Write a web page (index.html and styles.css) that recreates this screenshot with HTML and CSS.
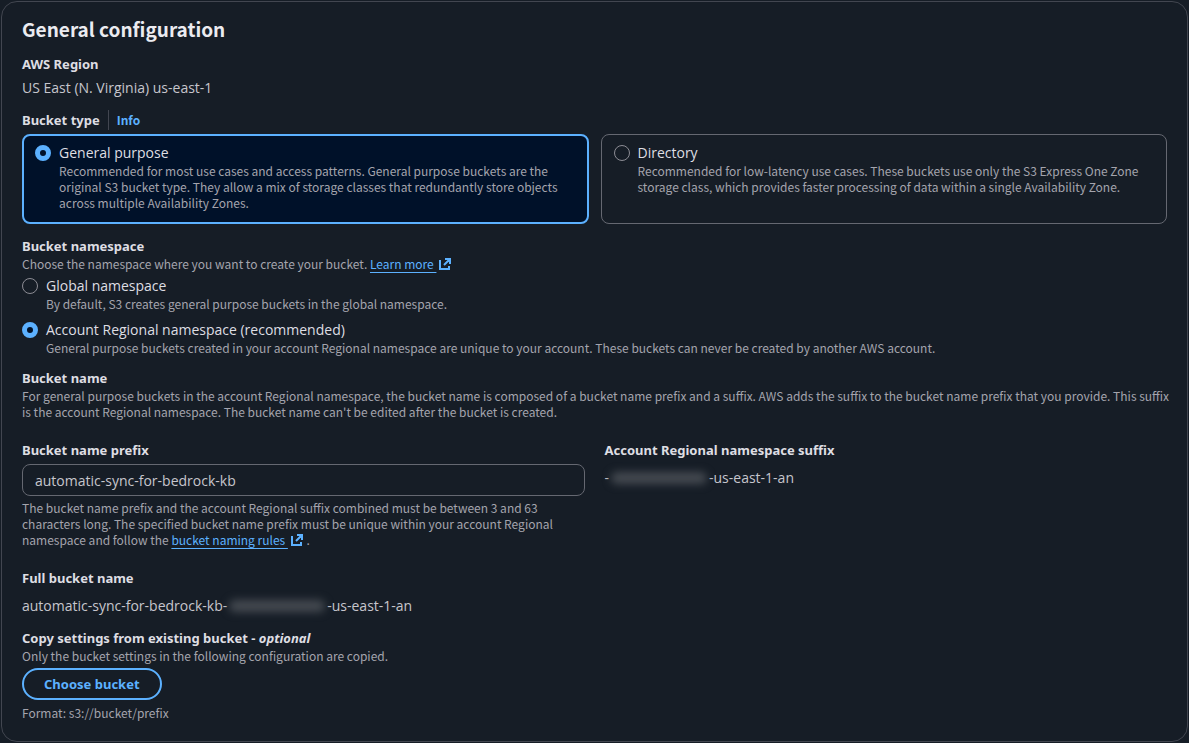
FILE: index.html
```html
<!DOCTYPE html>
<html lang="en">
<head>
<meta charset="utf-8">
<title>General configuration</title>
<link rel="stylesheet" href="styles.css">
</head>
<body>
<main class="card">
  <h2 class="title">General configuration</h2>

  <section class="field region">
    <h3 class="label">AWS Region</h3>
    <p class="value">US East (N. Virginia) us-east-1</p>
  </section>

  <section class="field">
    <div class="label-row">
      <h3 class="label" id="type-label">Bucket type</h3>
      <a class="info" href="#">Info</a>
    </div>
    <div class="tiles" role="radiogroup" aria-labelledby="type-label">
      <label class="tile option selected">
        <input class="radio" type="radio" name="type" checked>
        <span class="option-text">
          <span class="option-name">General purpose</span>
          <span class="hint">Recommended for most use cases and access patterns. General purpose buckets are the original S3 bucket type. They allow a mix of storage classes that redundantly store objects across multiple Availability Zones.</span>
        </span>
      </label>
      <label class="tile option">
        <input class="radio" type="radio" name="type">
        <span class="option-text">
          <span class="option-name">Directory</span>
          <span class="hint">Recommended for low-latency use cases. These buckets use only the S3 Express One Zone storage class, which provides faster processing of data within a single Availability Zone.</span>
        </span>
      </label>
    </div>
  </section>

  <section class="field">
    <h3 class="label" id="ns-label">Bucket namespace</h3>
    <p class="hint">Choose the namespace where you want to create your bucket. <a class="link" href="#"><span class="link-text">Learn more&nbsp;</span><svg class="external" viewBox="0 0 14 14" aria-hidden="true"><path d="M7 2h5v5M12 2 6 8M2 3v9h9V9"/></svg></a></p>
    <div class="radios" role="radiogroup" aria-labelledby="ns-label">
      <label class="option">
        <input class="radio" type="radio" name="namespace">
        <span class="option-text">
          <span class="option-name">Global namespace</span>
          <span class="hint">By default, S3 creates general purpose buckets in the global namespace.</span>
        </span>
      </label>
      <label class="option">
        <input class="radio" type="radio" name="namespace" checked>
        <span class="option-text">
          <span class="option-name">Account Regional namespace (recommended)</span>
          <span class="hint">General purpose buckets created in your account Regional namespace are unique to your account. These buckets can never be created by another AWS account.</span>
        </span>
      </label>
    </div>
  </section>

  <section class="field name">
    <h3 class="label">Bucket name</h3>
    <p class="hint wide">For general purpose buckets in the account Regional namespace, the bucket name is composed of a bucket name prefix and a suffix. AWS adds the suffix to the bucket name prefix that you provide. This suffix is the account Regional namespace. The bucket name can't be edited after the bucket is created.</p>
  </section>

  <div class="columns">
    <div>
      <label class="label" for="prefix">Bucket name prefix</label>
      <input class="text-input" id="prefix" type="text" value="automatic-sync-for-bedrock-kb">
      <p class="hint">The bucket name prefix and the account Regional suffix combined must be between 3 and 63 characters long. The specified bucket name prefix must be unique within your account Regional namespace and follow the <a class="link" href="#"><span class="link-text">bucket naming rules&nbsp;</span><svg class="external" viewBox="0 0 14 14" aria-hidden="true"><path d="M7 2h5v5M12 2 6 8M2 3v9h9V9"/></svg></a> .</p>
    </div>
    <div>
      <h3 class="label">Account Regional namespace suffix</h3>
      <p class="value suffix">-<span class="redacted"></span>-us-east-1-an</p>
    </div>
  </div>

  <section class="field full">
    <h3 class="label">Full bucket name</h3>
    <p class="value">automatic-sync-for-bedrock-kb-<span class="redacted"></span>-us-east-1-an</p>
  </section>

  <section class="field">
    <h3 class="label">Copy settings from existing bucket - <em>optional</em></h3>
    <p class="hint">Only the bucket settings in the following configuration are copied.</p>
    <button class="button" type="button">Choose bucket</button>
    <p class="hint">Format: s3://bucket/prefix</p>
  </section>
</main>
</body>
</html>
```

FILE: styles.css
```css
* {
  box-sizing: border-box;
}

body {
  margin: 0;
  padding: 1px;
  background: #161d26;
  color: #c6c6cd;
  font: 14px/20px "Open Sans", "Noto Sans", sans-serif;
}

h2, h3, p {
  margin: 0;
}

.card {
  display: flex;
  flex-direction: column;
  gap: 12px;
  padding: 16px 20px 20px;
  border: 1px solid #424650;
  border-radius: 16px;
  background: #161d26;
}

.title {
  margin-bottom: 2px;
  color: #ebebf0;
  font-family: "Noto Sans CJK SC", sans-serif;
  font-size: 19px;
  font-weight: 700;
  line-height: 22px;
}

.label {
  display: block;
  color: #dedee3;
  font-family: "Noto Sans", sans-serif;
  font-size: 13px;
  font-weight: 700;
  line-height: 20px;
}

.region .value {
  margin-top: 4px;
}

.label-row {
  display: flex;
  align-items: center;
  margin-bottom: 4px;
}

.info {
  margin-left: 8px;
  padding-left: 8px;
  border-left: 1px solid #424650;
  color: #5cb1ff;
  font-family: "Noto Sans CJK SC", sans-serif;
  font-size: 12px;
  font-weight: 700;
  text-decoration: none;
}

.hint {
  display: block;
  color: #a4a4ad;
  font-family: "Noto Sans CJK SC", sans-serif;
  font-size: 12px;
  line-height: 16px;
}

.wide {
  margin-right: -8px;
}

.tiles {
  display: grid;
  grid-template-columns: 1fr 1fr;
  gap: 12px;
}

.tile {
  min-height: 90px;
  padding: 8px 12px;
  border: 1px solid #656871;
  border-radius: 8px;
}

.tile.selected {
  padding: 7px 11px;
  border: 2px solid #5cb1ff;
  background: #001129;
}

.option {
  display: flex;
  align-items: flex-start;
  gap: 8px;
}

.option-name {
  display: block;
  color: #dedee3;
}

.radio {
  flex: none;
  width: 16px;
  height: 16px;
  margin: 2px 0;
  border: 1px solid #8c8c94;
  border-radius: 50%;
  appearance: none;
}

.radio:checked {
  border: 5px solid #5cb1ff;
  background: #001129;
}

.radios {
  display: grid;
  gap: 8px;
  margin-top: 4px;
}

.link {
  color: #5cb1ff;
  text-decoration: none;
  white-space: nowrap;
}

.link-text {
  text-decoration: underline;
  text-underline-offset: 3px;
}

.external {
  width: 14px;
  height: 14px;
  margin-left: 2px;
  vertical-align: -2px;
  fill: none;
  stroke: #5cb1ff;
  stroke-width: 2;
}

.columns {
  display: grid;
  grid-template-columns: 1fr 1fr;
  gap: 20px;
  margin-top: 8px;
}

.text-input {
  display: block;
  width: 100%;
  height: 32px;
  margin: 4px 0;
  padding: 0 12px;
  border: 1px solid #656871;
  border-radius: 8px;
  background: #161d26;
  color: #c6c6cd;
  font: inherit;
}

.suffix {
  margin-top: 8px;
}

.redacted {
  display: inline-block;
  width: 96px;
  height: 12px;
  margin: 0 2px;
  border-radius: 6px;
  background: #454a51;
  vertical-align: -1px;
  filter: blur(4px);
}

.full {
  margin-top: 8px;
}

.full .value {
  margin-top: 8px;
}

.button {
  display: block;
  height: 32px;
  margin: 4px 0 5px;
  padding: 0 20px;
  border: 2px solid #5cb1ff;
  border-radius: 16px;
  background: transparent;
  color: #5cb1ff;
  font: 700 13px/20px "Noto Sans", sans-serif;
}
```
